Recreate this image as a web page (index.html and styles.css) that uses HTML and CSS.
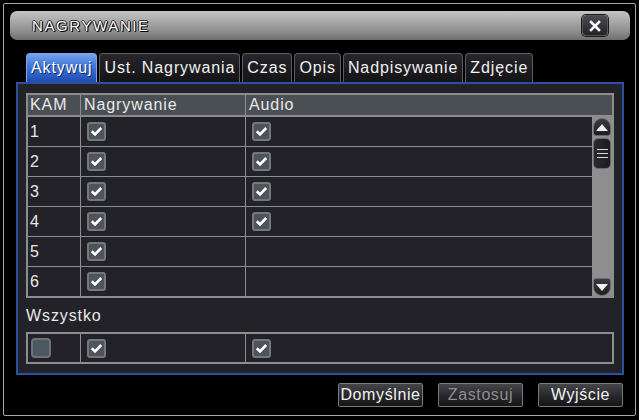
FILE: index.html
```html
<!DOCTYPE html>
<html lang="pl">
<head>
<meta charset="utf-8">
<title>NAGRYWANIE</title>
<link rel="stylesheet" href="styles.css">
</head>
<body>
<div class="frame">
  <div class="titlebar">
    <span class="title">NAGRYWANIE</span>
    <span class="close">
      <svg width="12" height="12" viewBox="0 0 12 12"><path d="M2 2 L10 10 M10 2 L2 10" stroke="#fff" stroke-width="2.6" stroke-linecap="square"/></svg>
    </span>
  </div>
  <div class="tabs">
    <div class="tab active">Aktywuj</div>
    <div class="tab">Ust. Nagrywania</div>
    <div class="tab">Czas</div>
    <div class="tab">Opis</div>
    <div class="tab">Nadpisywanie</div>
    <div class="tab">Zdjęcie</div>
  </div>
  <div class="panel">
    <div class="table">
      <div class="thead">
        <div class="cell c1">KAM</div>
        <div class="cell c2">Nagrywanie</div>
        <div class="cell c3">Audio</div>
      </div>
      <div class="tbody">
        <div class="rows">
          <div class="row"><div class="cell c1">1</div><div class="cell c2"><span class="cb on"></span></div><div class="cell c3"><span class="cb on"></span></div></div>
          <div class="row"><div class="cell c1">2</div><div class="cell c2"><span class="cb on"></span></div><div class="cell c3"><span class="cb on"></span></div></div>
          <div class="row"><div class="cell c1">3</div><div class="cell c2"><span class="cb on"></span></div><div class="cell c3"><span class="cb on"></span></div></div>
          <div class="row"><div class="cell c1">4</div><div class="cell c2"><span class="cb on"></span></div><div class="cell c3"><span class="cb on"></span></div></div>
          <div class="row"><div class="cell c1">5</div><div class="cell c2"><span class="cb on"></span></div><div class="cell c3"></div></div>
          <div class="row"><div class="cell c1">6</div><div class="cell c2"><span class="cb on"></span></div><div class="cell c3"></div></div>
        </div>
        <div class="scrollbar">
          <div class="sb-up"><svg width="12" height="7" viewBox="0 0 12 7"><path d="M0 7 L6 0 L12 7 Z" fill="#f0f0f0"/></svg></div>
          <div class="sb-thumb"><i></i><i></i><i></i></div>
          <div class="sb-space"></div>
          <div class="sb-down"><svg width="12" height="7" viewBox="0 0 12 7"><path d="M0 0 L6 7 L12 0 Z" fill="#f0f0f0"/></svg></div>
        </div>
      </div>
    </div>
    <div class="all-label">Wszystko</div>
    <div class="table all">
      <div class="row">
        <div class="cell c1"><span class="cb off"></span></div>
        <div class="cell c2"><span class="cb on"></span></div>
        <div class="cell c3"><span class="cb on"></span></div>
      </div>
    </div>
  </div>
  <div class="buttons">
    <div class="btn">Domyślnie</div>
    <div class="btn disabled">Zastosuj</div>
    <div class="btn">Wyjście</div>
  </div>
</div>
</body>
</html>
```

FILE: styles.css
```css
* { box-sizing: border-box; }
html, body { margin: 0; padding: 0; }
body {
  width: 639px;
  height: 420px;
  overflow: hidden;
  background: #000;
  font-family: "Liberation Sans", Arial, sans-serif;
  font-size: 16px;
  letter-spacing: 0.9px;
  color: #e8e8e8;
}
.frame {
  margin: 3px 0 0 3px;
  width: 633px;
  height: 413px;
  border: 1px solid #a8a8a8;
  border-radius: 2px;
  padding-top: 7px;
  display: flex;
  flex-direction: column;
}
.titlebar {
  margin-left: 6px;
  width: 620px;
  height: 29px;
  border-radius: 7px;
  background: linear-gradient(#c4c4c4 0%, #a9a9a9 35%, #8e8e8e 70%, #6e6e6e 100%);
  display: flex;
  align-items: center;
  justify-content: space-between;
  padding: 0 22px 0 22px;
}
.title {
  color: #fff;
  font-size: 15px;
  letter-spacing: 1.6px;
  text-shadow: 1px 1px 0 #000, -1px 0 0 #222, 0 -1px 0 #333, 1px 0 0 #111;
}
.close {
  width: 26px;
  height: 21px;
  border-radius: 4px;
  border: 1px solid #555;
  background: linear-gradient(#4a4a50, #232327);
  display: flex;
  align-items: center;
  justify-content: center;
  box-shadow: 0 0 0 1px #1a1a1a;
}
.close svg { display: block; }
.tabs {
  margin: 13px 0 0 22px;
  display: flex;
  gap: 2px;
  height: 29px;
}
.tab {
  height: 29px;
  padding: 0 4px;
  border: 1px solid #5c5c62;
  border-bottom: none;
  border-radius: 4px 4px 0 0;
  background: linear-gradient(#26262b, #141417);
  display: flex;
  align-items: center;
  white-space: nowrap;
  color: #f0f0f0;
}
.tab.active {
  border-color: #7ea3e6;
  background: linear-gradient(#74a2ee 0%, #3f74d8 45%, #1e4cb2 100%);
  color: #fff;
  text-shadow: 1px 1px 0 #0c2a66;
}
.panel {
  margin-left: 12px;
  width: 608px;
  height: 293px;
  border: 2px solid #2e4f9e;
  background: #222228;
  padding: 9px 0 0 8px;
}
.table {
  width: 588px;
  border: 2px solid #8d8d8d;
}
.thead {
  display: flex;
  height: 22px;
  background: #4a4f54;
  border-bottom: 2px solid #8d8d8d;
}
.cell {
  display: flex;
  align-items: center;
  padding-left: 2px;
  white-space: nowrap;
}
.c1 { width: 52px; }
.c2 { width: 165px; border-left: 1px solid #8d8d8d; padding-left: 6px; }
.c3 { flex: 1; border-left: 1px solid #8d8d8d; padding-left: 6px; }
.thead .c2, .thead .c3 { padding-left: 3px; }
.tbody { display: flex; }
.rows { flex: 1; }
.row {
  display: flex;
  height: 30px;
  border-bottom: 1px solid #8d8d8d;
}
.rows .row:last-child { border-bottom: none; height: 29px; }
.cb {
  display: block;
  width: 19px;
  height: 19px;
  border: 2px solid #74787c;
  border-radius: 3px;
  background: #4f5459;
}
.cb.on {
  background: #4f5459 url("data:image/svg+xml;utf8,<svg xmlns='http://www.w3.org/2000/svg' width='15' height='15' viewBox='0 0 15 15'><path d='M2.8 7.3 L6 10.4 L12.2 4' fill='none' stroke='white' stroke-width='2.6'/></svg>") center / 15px 15px no-repeat;
}
.cb.off {
  width: 20px;
  height: 20px;
  background: #4b5761;
  border-color: #6f7378;
  border-radius: 4px;
}
.all .c1 { padding-left: 3px; }
.scrollbar {
  width: 20px;
  background: #8e8e8e;
  display: flex;
  flex-direction: column;
  padding: 1px 1px 0 1px;
}
.sb-up, .sb-down {
  height: 18px;
  background: linear-gradient(#3a3a40, #1e1e22);
  border: 1px solid #6a6a6a;
  display: flex;
  align-items: center;
  justify-content: center;
}
.sb-up { border-radius: 9px 9px 3px 3px; }
.sb-down { border-radius: 3px 3px 9px 9px; }
.sb-thumb {
  margin-top: 2px;
  height: 31px;
  border-radius: 5px;
  border: 1px solid #6a6a6a;
  background: linear-gradient(90deg, #2a2a2f, #1c1c20);
  display: flex;
  flex-direction: column;
  justify-content: center;
  align-items: center;
  gap: 3px;
}
.sb-thumb i {
  display: block;
  width: 11px;
  height: 1px;
  background: #d8d8d8;
}
.sb-space { flex: 1; }
.all-label {
  padding-top: 9px;
  line-height: 18px;
  height: 34px;
}
.all .row {
  height: 28px;
  border-bottom: none;
}
.buttons {
  margin-top: 8px;
  display: flex;
  justify-content: flex-end;
  gap: 15px;
  padding-right: 12px;
}
.btn {
  width: 85px;
  height: 24px;
  border: 1px solid #7a7a7a;
  border-radius: 2px;
  background: linear-gradient(#45454a 0%, #2a2a2e 50%, #151517 100%);
  display: flex;
  align-items: center;
  justify-content: center;
  color: #f2f2f2;
  letter-spacing: 0.6px;
}
.btn.disabled { color: #8e8e8e; }
```
